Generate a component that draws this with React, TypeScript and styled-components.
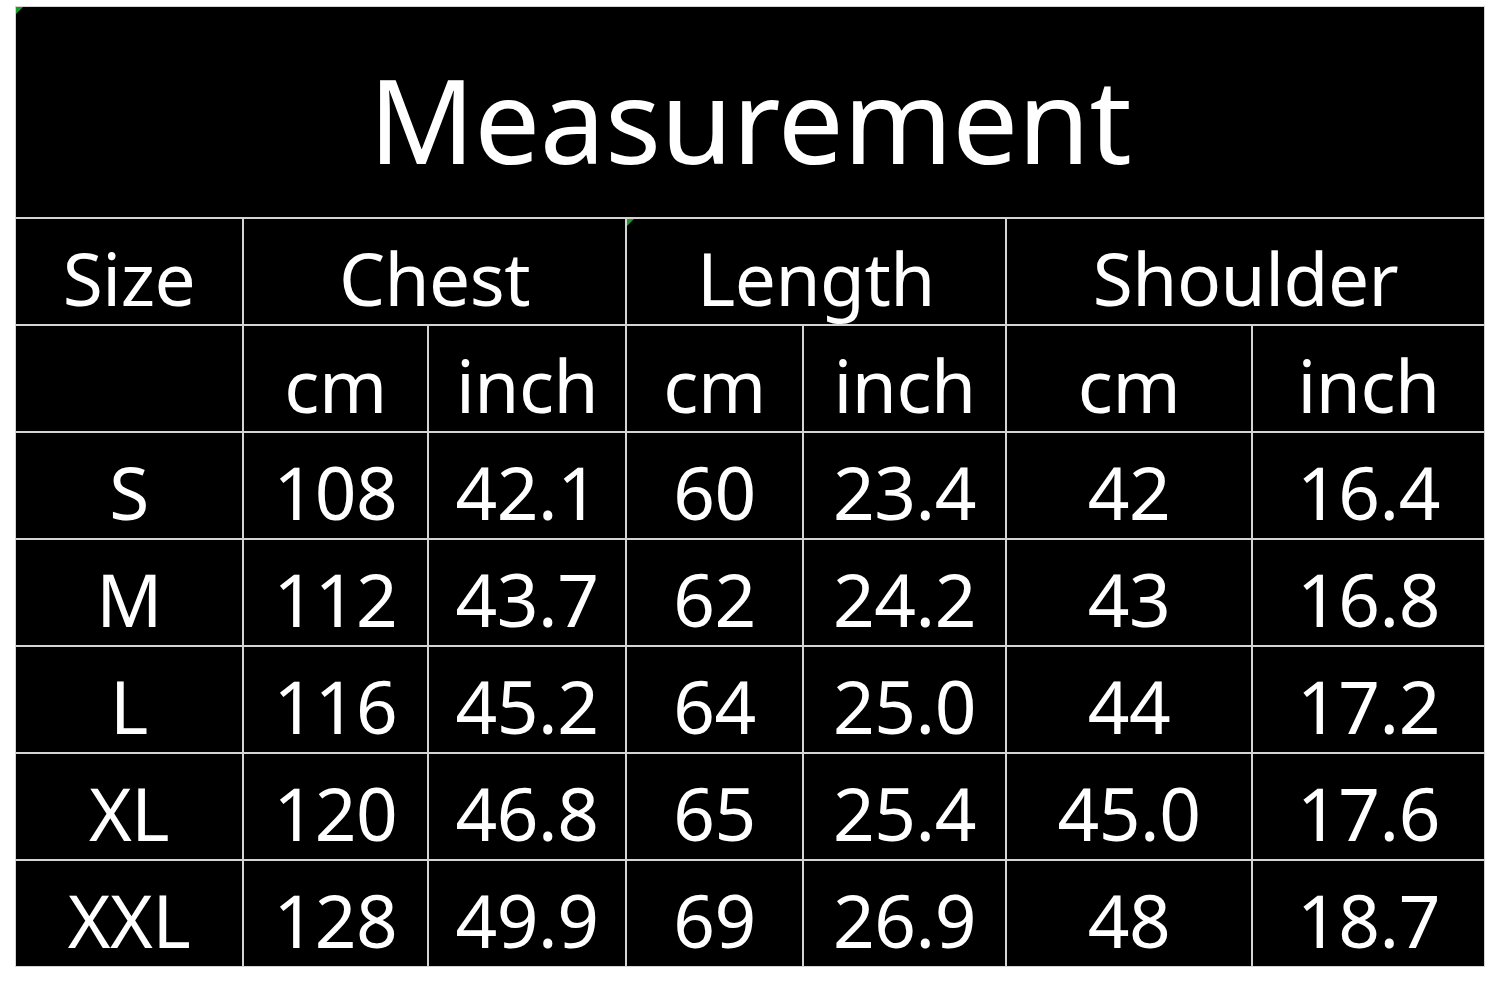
import styled, { createGlobalStyle } from "styled-components";

const GlobalStyle = createGlobalStyle`
  html, body {
    margin: 0;
    padding: 0;
    background: #ffffff;
  }
  body {
    font-family: "Noto Sans", "Open Sans", "DejaVu Sans", sans-serif;
  }
`;

type Row = {
  size: string;
  values: string[];
};

const rows: Row[] = [
  { size: "S", values: ["108", "42.1", "60", "23.4", "42", "16.4"] },
  { size: "M", values: ["112", "43.7", "62", "24.2", "43", "16.8"] },
  { size: "L", values: ["116", "45.2", "64", "25.0", "44", "17.2"] },
  { size: "XL", values: ["120", "46.8", "65", "25.4", "45.0", "17.6"] },
  { size: "XXL", values: ["128", "49.9", "69", "26.9", "48", "18.7"] },
];

const groups = ["Chest", "Length", "Shoulder"];

const App = () => {
  return (
    <Page>
      <GlobalStyle />
      <Table>
        <Title>
          Measurement
          <Marker />
        </Title>
        <Cell>Size</Cell>
        {groups.map((g, i) => (
          <Cell key={g} $span={2}>
            {g}
            {i === 1 && <Marker />}
          </Cell>
        ))}
        <Cell />
        {groups.map((g) => [
          <Cell key={g + "cm"}>cm</Cell>,
          <Cell key={g + "in"}>inch</Cell>,
        ])}
        {rows.map((r) => [
          <Cell key={r.size}>{r.size}</Cell>,
          ...r.values.map((v, i) => <Cell key={r.size + i}>{v}</Cell>),
        ])}
      </Table>
    </Page>
  );
};

const Page = styled.div`
  padding: 6px 0 0 15px;
`;

const Table = styled.div`
  display: grid;
  grid-template-columns: 226px 183px 196px 175px 201px 244px 231px;
  grid-template-rows: 210px repeat(7, 105px);
  gap: 2px;
  width: max-content;
  padding: 1px;
  background: #d4d4d4;
`;

const Cell = styled.div<{ $span?: number }>`
  position: relative;
  grid-column: span ${({ $span }) => $span ?? 1};
  background: #000000;
  color: #ffffff;
  font-size: 73px;
  font-weight: 400;
  letter-spacing: -0.5px;
  display: flex;
  align-items: center;
  justify-content: center;
  padding-top: 12px;
  box-sizing: border-box;
  white-space: nowrap;
`;

const Title = styled(Cell)`
  grid-column: 1 / -1;
  font-size: 117px;
  letter-spacing: -0.5px;
  padding-top: 12px;
`;

const Marker = styled.span`
  position: absolute;
  top: 0;
  left: 0;
  width: 0;
  height: 0;
  border-top: 7px solid #1f9a2a;
  border-right: 7px solid transparent;
`;

export default App;
